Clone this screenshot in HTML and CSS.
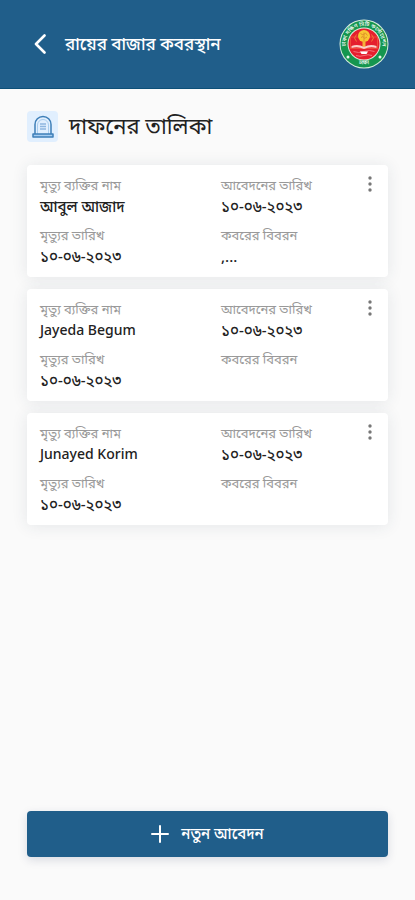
FILE: index.html
```html
<!DOCTYPE html>
<html lang="bn">
<head>
  <meta charset="UTF-8" />
  <meta name="viewport" content="width=device-width, initial-scale=1" />
  <title>দাফনের তালিকা</title>
  <link rel="stylesheet" href="styles.css">
</head>
<body>
  <header class="topbar">
    <button type="button" class="back-btn" aria-label="Back">
      <svg width="14" height="20" viewBox="0 0 14 20"><path d="M11.500 1.500L3 10l8.500 8.500" fill="none" stroke="#fff" stroke-width="2.600" stroke-linecap="round" stroke-linejoin="round"/></svg>
    </button>
    <p class="place">রায়ের বাজার কবরস্থান</p>
    <svg class="seal" viewBox="0 0 100 100" aria-hidden="true">
      <defs>
        <path id="sealTop" d="M18.500 69A36.500 36.500 0 1 1 81.500 69"/>
        <path id="sealBottom" d="M30 86A44 44 0 0 0 70 86"/>
      </defs>
      <circle cx="50" cy="50" r="49" fill="#d5ecdc"/>
      <circle cx="50" cy="50" r="47" fill="#15964f"/>
      <circle cx="50" cy="50" r="33" fill="#dff0df"/>
      <circle cx="50" cy="50" r="31" fill="#e51f2e"/>
      <path d="M23 36h54v23H23z" fill="#e51f2e" stroke="#f0593f" stroke-width="1.5"/>
      <path d="M35 31l-4 7 4 7M65 31l4 7-4 7" fill="none" stroke="#f0743a" stroke-width="2"/>
      <circle cx="50" cy="34" r="12" fill="#f8c832"/>
      <path d="M43 29l5 3 5-4 4 5M44 37l4-2 3 4 5-3M50 27v18" fill="none" stroke="#e0932a" stroke-width="2"/>
      <path d="M47 45h6v12h-6z" fill="#f6b13a"/>
      <path d="M25 54q13-5 25 2 12-7 25-2v4q-13-4-25 2-12-6-25-2z" fill="#fbd0c8"/>
      <path d="M29 65q10 4 21 0t21 0M34 73q8 3 16 0t16 0" fill="none" stroke="#f0707a" stroke-width="2"/>
      <path d="M42 65h16l-3 5H45z" fill="#fff"/>
      <circle cx="18" cy="76" r="3" fill="#e9f5e9"/>
      <circle cx="82" cy="76" r="3" fill="#e9f5e9"/>
      <text class="seal-text"><textPath href="#sealTop" startOffset="50%">ঢাকা দক্ষিণ সিটি কর্পোরেশন</textPath></text>
      <text class="seal-text"><textPath href="#sealBottom" startOffset="50%">ঢাকা</textPath></text>
    </svg>
  </header>

  <main class="content">
    <div class="page-title">
      <span class="title-icon">
        <svg width="24" height="24" viewBox="0 0 24 24" fill="none" stroke="#3e7fb8" stroke-width="1.5" stroke-linejoin="round">
          <path d="M4 19V9.500a8 8 0 0 1 16 0V19"/>
          <path d="M6.500 19V10a5.500 5.500 0 0 1 11 0v9" stroke="#a9cdee" stroke-width="1"/>
          <path d="M9 9h6M9 11.500h6M9 14h6" stroke="#8fb6e0"/>
          <path d="M2 19h20v3H2z" fill="#a7cdf1"/>
        </svg>
      </span>
      <h1>দাফনের তালিকা</h1>
    </div>

    <section class="list">
      <article class="card">
        <dl class="fields">
          <div><dt>মৃত্যু ব্যক্তির নাম</dt><dd>আবুল আজাদ</dd></div>
          <div><dt>আবেদনের তারিখ</dt><dd>১০-০৬-২০২৩</dd></div>
          <div><dt>মৃত্যুর তারিখ</dt><dd>১০-০৬-২০২৩</dd></div>
          <div><dt>কবরের বিবরন</dt><dd>,...</dd></div>
        </dl>
        <button type="button" class="menu-btn" aria-label="Menu">
          <svg width="6" height="16" viewBox="0 0 6 16" fill="#777"><circle cx="3" cy="2" r="1.7"/><circle cx="3" cy="8" r="1.7"/><circle cx="3" cy="14" r="1.7"/></svg>
        </button>
      </article>

      <article class="card">
        <dl class="fields">
          <div><dt>মৃত্যু ব্যক্তির নাম</dt><dd class="latin">Jayeda Begum</dd></div>
          <div><dt>আবেদনের তারিখ</dt><dd>১০-০৬-২০২৩</dd></div>
          <div><dt>মৃত্যুর তারিখ</dt><dd>১০-০৬-২০২৩</dd></div>
          <div><dt>কবরের বিবরন</dt><dd></dd></div>
        </dl>
        <button type="button" class="menu-btn" aria-label="Menu">
          <svg width="6" height="16" viewBox="0 0 6 16" fill="#777"><circle cx="3" cy="2" r="1.7"/><circle cx="3" cy="8" r="1.7"/><circle cx="3" cy="14" r="1.7"/></svg>
        </button>
      </article>

      <article class="card">
        <dl class="fields">
          <div><dt>মৃত্যু ব্যক্তির নাম</dt><dd class="latin">Junayed Korim</dd></div>
          <div><dt>আবেদনের তারিখ</dt><dd>১০-০৬-২০২৩</dd></div>
          <div><dt>মৃত্যুর তারিখ</dt><dd>১০-০৬-২০২৩</dd></div>
          <div><dt>কবরের বিবরন</dt><dd></dd></div>
        </dl>
        <button type="button" class="menu-btn" aria-label="Menu">
          <svg width="6" height="16" viewBox="0 0 6 16" fill="#777"><circle cx="3" cy="2" r="1.7"/><circle cx="3" cy="8" r="1.7"/><circle cx="3" cy="14" r="1.7"/></svg>
        </button>
      </article>
    </section>

    <button type="button" class="apply-btn">
      <svg width="18" height="18" viewBox="0 0 18 18"><path d="M9 1v16M1 9h16" stroke="#fff" stroke-width="2" stroke-linecap="round"/></svg>
      <span>নতুন আবেদন</span>
    </button>
  </main>
</body>
</html>
```

FILE: styles.css
```css
* {
  box-sizing: border-box;
}
body {
  margin: 0;
  min-height: 100vh;
  display: flex;
  flex-direction: column;
  background: #fafafa;
  color: #222;
  font-family: "Noto Sans", "Noto Sans Bengali", sans-serif;
}
button {
  border: none;
  padding: 0;
  background: none;
  font-family: inherit;
  cursor: pointer;
}
svg {
  display: block;
}
.topbar {
  display: flex;
  align-items: center;
  height: 89px;
  padding: 0 26px 0 33px;
  background: #205e8a;
  border-bottom: 1px solid #0d5078;
  color: #fff;
}
.back-btn {
  flex: none;
}
.place {
  flex: 1;
  margin: 0 0 0 18px;
  font-size: 17px;
  font-weight: 500;
  line-height: 24px;
}
.seal {
  flex: none;
  width: 50px;
  height: 50px;
}
.seal-text {
  fill: #fff;
  font-size: 11px;
  font-weight: 500;
  text-anchor: middle;
}
.content {
  flex: 1;
  display: flex;
  flex-direction: column;
  padding: 22px 27px 43px;
}
.page-title {
  display: flex;
  align-items: flex-start;
  gap: 11px;
  margin-bottom: 23px;
}
.title-icon {
  display: grid;
  place-items: center;
  width: 31px;
  height: 31px;
  border-radius: 4px;
  background: #e1effe;
}
h1 {
  margin: 0;
  font-size: 22px;
  font-weight: 400;
  line-height: 28px;
}
.list {
  display: flex;
  flex-direction: column;
  gap: 12px;
  margin-bottom: 24px;
}
.card {
  display: flex;
  align-items: flex-start;
  padding: 10px 13px;
  border-radius: 4px;
  background: #fff;
  box-shadow: 0 1px 16px rgba(40, 60, 80, 0.1);
}
.fields {
  flex: 1;
  display: grid;
  grid-template-columns: 1fr 1fr;
  gap: 8px 26px;
  margin: 0 -13px 0 0;
}
dt {
  color: #999;
  font-size: 13px;
  line-height: 20px;
  white-space: nowrap;
}
dd {
  min-height: 22px;
  margin: 0;
  font-size: 15px;
  font-weight: 500;
  line-height: 22px;
}
dd.latin {
  font-size: 14px;
}
.menu-btn {
  padding: 1px 2px 1px 4px;
}
.apply-btn {
  display: flex;
  align-items: center;
  justify-content: center;
  gap: 12px;
  height: 46px;
  margin-top: auto;
  border-radius: 4px;
  background: #205e8a;
  box-shadow: 0 3px 10px rgba(30, 40, 90, 0.15);
  color: #fff;
  font-size: 15px;
  font-weight: 500;
}
```
